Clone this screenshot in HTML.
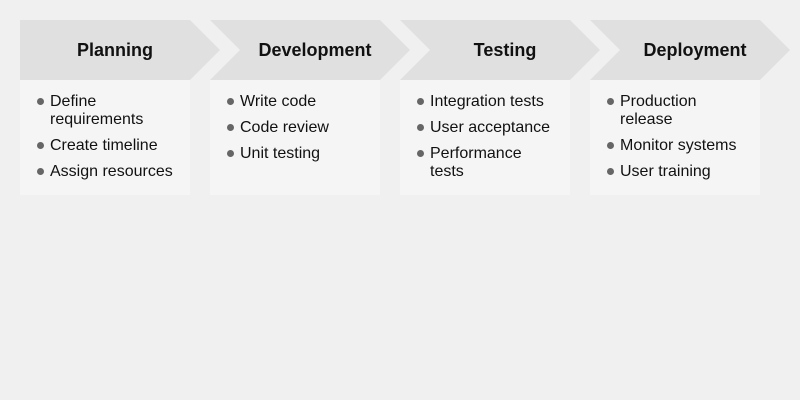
<!DOCTYPE html>
<html><head><style>
body{margin:0;width:800px;height:400px;background:#f0f0f0;font-family:"Liberation Sans",sans-serif;position:relative;overflow:hidden}
svg{position:absolute;left:0;top:0}
.t{position:absolute;top:38px;width:190px;text-align:center;font-weight:bold;font-size:18px;color:#111;line-height:24px}
.c{position:absolute;top:80px;width:170px;height:115px;background:#f5f5f5}
ul{margin:0;padding:0;list-style:none;position:absolute;top:93px}
li{position:relative;padding-left:30px;font-size:16px;line-height:18px;color:#111;margin-bottom:8px;width:126px}
li:before{content:"";position:absolute;left:17px;top:5px;width:7px;height:7px;border-radius:50%;background:#666}
</style></head><body>
<div class="c" style="left:20px"></div><div class="c" style="left:210px"></div><div class="c" style="left:400px"></div><div class="c" style="left:590px"></div>
<svg width="800" height="400">
<polygon points="20,20 190,20 220,50 190,80 20,80" fill="#e0e0e0"/>
<polygon points="210,20 380,20 410,50 380,80 210,80 240,50" fill="#e0e0e0"/>
<polygon points="400,20 570,20 600,50 570,80 400,80 430,50" fill="#e0e0e0"/>
<polygon points="590,20 760,20 790,50 760,80 590,80 620,50" fill="#e0e0e0"/>
</svg>
<div class="t" style="left:20px">Planning</div>
<div class="t" style="left:220px">Development</div>
<div class="t" style="left:410px">Testing</div>
<div class="t" style="left:600px">Deployment</div>
<ul style="left:20px"><li>Define requirements</li><li>Create timeline</li><li>Assign resources</li></ul>
<ul style="left:210px"><li>Write code</li><li>Code review</li><li>Unit testing</li></ul>
<ul style="left:400px"><li>Integration tests</li><li>User acceptance</li><li>Performance tests</li></ul>
<ul style="left:590px"><li>Production release</li><li>Monitor systems</li><li>User training</li></ul>
</body></html>
